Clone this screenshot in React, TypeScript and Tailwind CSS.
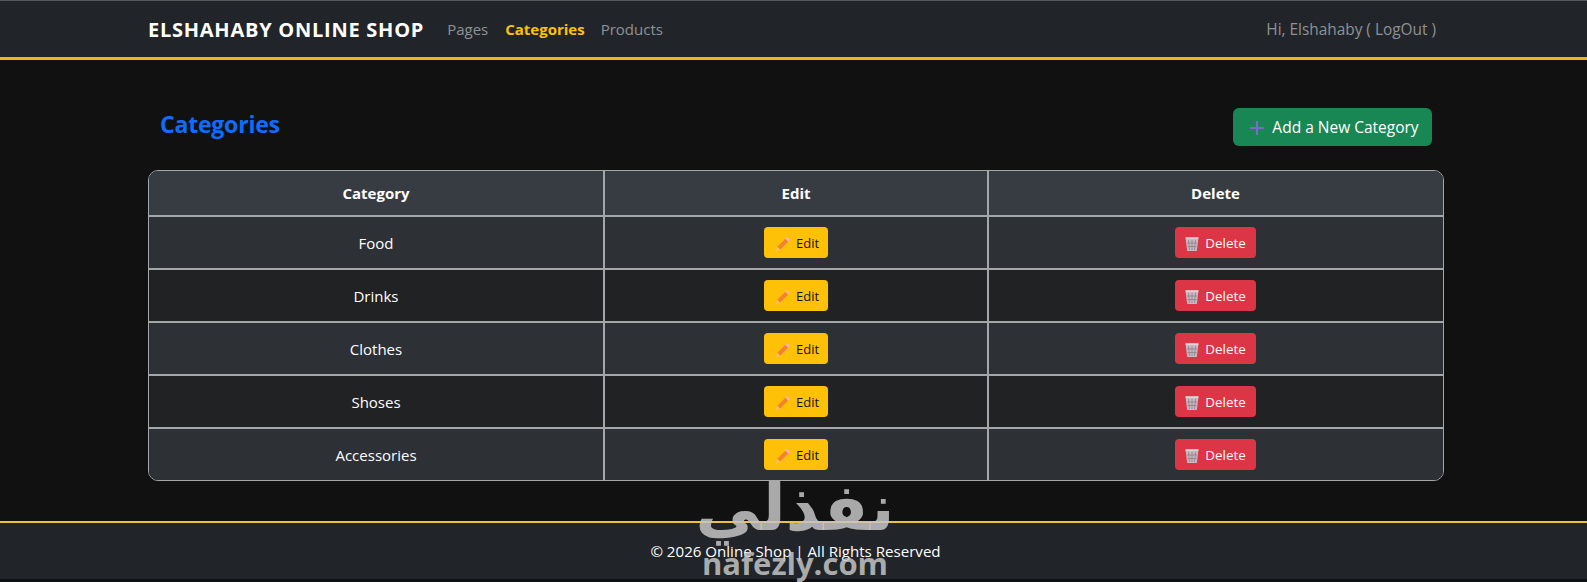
const categories = ["Food", "Drinks", "Clothes", "Shoses", "Accessories"];

function PencilIcon() {
  return (
    <svg viewBox="0 0 16 16" className="w-[16px] h-[16px] shrink-0">
      <path d="M0.8 15.2 L2.4 10.8 L5.2 13.6 Z" fill="#f8c27a" />
      <path d="M2.4 10.8 L10.4 2.8 L13.2 5.6 L5.2 13.6 Z" fill="#f4822e" />
      <path d="M10.4 2.8 L12.2 1 L15 3.8 L13.2 5.6 Z" fill="#f5b5ae" />
    </svg>
  );
}

function TrashIcon() {
  return (
    <svg viewBox="0 0 16 16" className="w-[16px] h-[16px] shrink-0">
      <path d="M1.5 1.5 H14.5 L12.8 15 H3.2 Z" fill="#c9b9c2" />
      <path d="M4.5 4 L5.5 14 M8 4 V14 M11.5 4 L10.5 14 M3 7 H13 M3.5 10.5 H12.5" stroke="#8d7f8a" strokeWidth="0.8" fill="none" />
      <path d="M1.5 2 H14.5" stroke="#e6e2e5" strokeWidth="1.2" />
    </svg>
  );
}

export default function App() {
  return (
    <div className="relative h-[582px] overflow-hidden bg-[#111112] font-['Open_Sans','Noto_Sans',sans-serif] text-white flex flex-col">
      {/* Navbar */}
      <nav className="h-[60px] shrink-0 bg-[#212529] border-t border-[#55585b] border-b-[3px] border-b-[#f0b41c] flex items-center justify-between pl-[148px] pr-[151px]">
        <div className="flex items-center">
          <a className="text-[20px] font-bold tracking-[0.75px] text-white mr-[23px] pt-[1px] whitespace-nowrap">ELSHAHABY ONLINE SHOP</a>
          <div className="flex items-center gap-[16px] text-[15px]">
            <a className="text-[#8f9295] mr-[1px]">Pages</a>
            <a className="text-[#ffc107] font-bold">Categories</a>
            <a className="text-[#8f9295]">Products</a>
          </div>
        </div>
        <span className="text-[15.4px] text-[#8f9295] pt-[2px] whitespace-nowrap">Hi, Elshahaby ( LogOut )</span>
      </nav>

      <main className="flex-1 pl-[148px] pr-[143px]">
        {/* Title and add button */}
        <div className="h-[110px] flex items-start justify-between pl-[12px] pr-[12px]">
          <h1 className="mt-[49px] text-[23px] leading-[30px] font-bold text-[#0d6efd] tracking-[-0.2px]">Categories</h1>
          <button className="mt-[48px] h-[38px] w-[199px] rounded-md bg-[#198754] text-[15.5px] pl-[3px] pt-[2px] flex items-center justify-center gap-[7px] text-white">
            <svg viewBox="0 0 16 16" className="w-[16px] h-[16px] shrink-0">
              <path d="M8 1 V15 M1 8 H15" stroke="#7d66d0" strokeWidth="2" />
            </svg>
            Add a New Category
          </button>
        </div>

        {/* Table */}
        <div className="rounded-[10px] border border-[#a4a7aa] overflow-hidden">
          <table className="w-full table-fixed border-collapse text-[15px] text-center">
            <colgroup>
              <col className="w-[455px]" />
              <col className="w-[384px]" />
              <col />
            </colgroup>
            <thead>
              <tr className="h-[45px] bg-[#373b42]">
                <th className="font-bold">Category</th>
                <th className="font-bold border-x-2 border-[#a4a7aa]">Edit</th>
                <th className="font-bold pr-[1px]">Delete</th>
              </tr>
            </thead>
            <tbody>
              {categories.map((name, i) => (
                <tr
                  key={name}
                  className={`border-t-2 border-[#a4a7aa] ${i === categories.length - 1 ? "h-[52px]" : "h-[53px]"} ${i % 2 === 0 ? "bg-[#2d3034]" : "bg-[#212223]"}`}
                >
                  <td className="pt-[1px]">{name}</td>
                  <td className="border-x-2 border-[#a4a7aa]">
                    <button className="mx-auto h-[31px] w-[64px] rounded-[4px] bg-[#ffc107] text-[#111] text-[13px] pt-[2px] pl-[2px] flex items-center justify-center gap-[5px]">
                      <PencilIcon />
                      Edit
                    </button>
                  </td>
                  <td className="pr-[2px]">
                    <button className="mx-auto h-[31px] w-[81px] rounded-[4px] bg-[#dc3545] text-white text-[13.4px] pt-[2px] flex items-center justify-center gap-[5px]">
                      <TrashIcon />
                      Delete
                    </button>
                  </td>
                </tr>
              ))}
            </tbody>
          </table>
        </div>
      </main>

      {/* Footer */}
      <footer className="h-[58px] mb-[3px] shrink-0 bg-[#212529] border-t-2 border-[#f0c040] flex items-center justify-center text-[15.1px] text-white pt-[1px] pl-[4px]">
        © 2026 Online Shop | All Rights Reserved
      </footer>

      {/* Watermark */}
      <div className="absolute left-[690px] top-[470px] w-[210px] flex flex-col items-center text-[#c4c4c4]/85 pointer-events-none select-none">
        <span dir="rtl" className="font-['DejaVu_Sans',sans-serif] font-bold text-[65px] leading-[76px] whitespace-nowrap">نفذلي</span>
        <span className="font-['Open_Sans',sans-serif] font-bold text-[31px] leading-[30px] mt-[2px] whitespace-nowrap">nafezly.com</span>
      </div>
    </div>
  );
}
